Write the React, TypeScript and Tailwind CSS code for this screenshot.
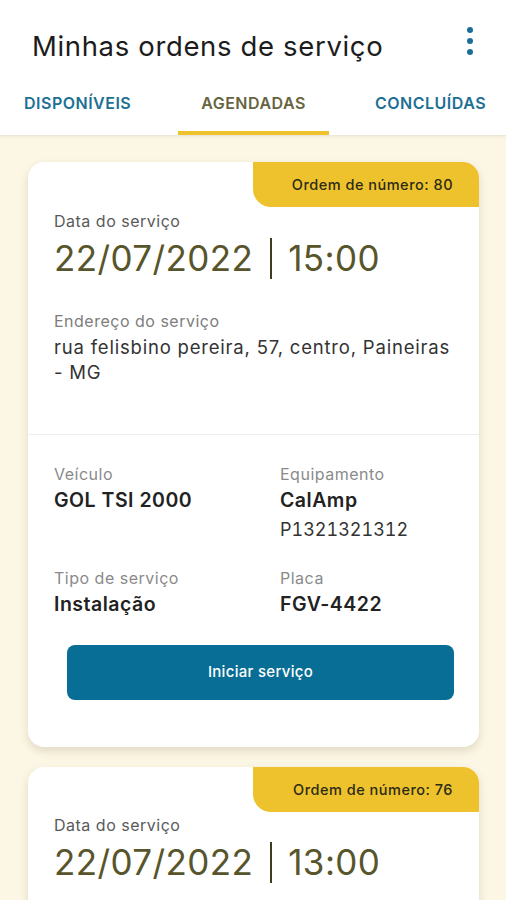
const font = { fontFamily: 'Inter, "Noto Sans", sans-serif' };

type Order = {
  numero: number;
  data: string;
  hora: string;
  endereco: string[];
  veiculo: string;
  equipamento: string;
  serial: string;
  tipo: string;
  placa: string;
};

const orders: Order[] = [
  {
    numero: 80,
    data: '22/07/2022',
    hora: '15:00',
    endereco: ['rua felisbino pereira, 57, centro, Paineiras', '- MG'],
    veiculo: 'GOL TSI 2000',
    equipamento: 'CalAmp',
    serial: 'P1321321312',
    tipo: 'Instalação',
    placa: 'FGV-4422',
  },
];

function Badge({ numero }: { numero: number }) {
  return (
    <div className="absolute top-0 right-0 w-[226px] h-[45px] bg-[#eec22c] rounded-bl-[18px] rounded-tr-[16px] flex items-center justify-end pr-[26px]">
      <span className="text-[14.5px] tracking-[0.5px] font-medium text-[#2b2a17]">Ordem de número: {numero}</span>
    </div>
  );
}

function DateLine({ data, hora }: { data: string; hora: string }) {
  return (
    <div className="flex items-center mt-[6px] text-[35px] leading-[42px] tracking-[0.4px] text-[#58552c]">
      <span>{data}</span>
      <span className="w-[2px] h-[41px] bg-[#3f3c22] ml-[17px] mr-[16px]" />
      <span>{hora}</span>
    </div>
  );
}

function Field({ label, children }: { label: string; children: React.ReactNode }) {
  return (
    <div>
      <p className="text-[16px] leading-[20px] tracking-[0.5px] text-[#8a8a8a]">{label}</p>
      <div className="mt-[4px] text-[19.5px] leading-[25px] tracking-[0.5px] text-[#222]">{children}</div>
    </div>
  );
}

function OrderCard({ order }: { order: Order }) {
  return (
    <div className="relative bg-white rounded-[16px] shadow-[0_4px_10px_rgba(60,50,10,0.14)]">
      <Badge numero={order.numero} />
      <div className="px-[26px] pt-[49px] pb-[49px]">
        <p className="text-[16px] leading-[20px] tracking-[0.5px] text-[#5a5a5a]">Data do serviço</p>
        <DateLine data={order.data} hora={order.hora} />
        <p className="mt-[32px] text-[16px] leading-[20px] tracking-[0.5px] text-[#7d7d7d]">Endereço do serviço</p>
        <p className="mt-[4px] text-[18.5px] leading-[25px] tracking-[0.8px] text-[#333] whitespace-nowrap">
          {order.endereco[0]}
          <br />
          {order.endereco[1]}
        </p>
      </div>
      <div className="h-px bg-[#eeeeee]" />
      <div className="px-[26px] pt-[29px] pb-[47px]">
        <div className="grid grid-cols-[226px_1fr] gap-y-[26px]">
          <Field label="Veículo">
            <span className="font-semibold">{order.veiculo}</span>
          </Field>
          <Field label="Equipamento">
            <span className="block font-semibold">{order.equipamento}</span>
            <span className="block mt-[4px] text-[18px] tracking-normal tabular-nums text-[#333]">{order.serial}</span>
          </Field>
          <Field label="Tipo de serviço">
            <span className="font-semibold">{order.tipo}</span>
          </Field>
          <Field label="Placa">
            <span className="font-semibold">{order.placa}</span>
          </Field>
        </div>
        <button className="mt-[28px] ml-[13px] w-[387px] h-[55px] rounded-[8px] bg-[#086e95] text-white text-[15px] tracking-[0.3px] font-medium flex items-center justify-center">
          Iniciar serviço
        </button>
      </div>
    </div>
  );
}

export default function App() {
  return (
    <div className="w-[506px] h-[900px] overflow-hidden bg-[#fcf6e4] flex flex-col" style={font}>
      {/* Header */}
      <header className="bg-white border-b border-[#ece7d6] shadow-[0_1px_3px_rgba(0,0,0,0.06)] shrink-0">
        <div className="flex items-center justify-between pt-[30px] pl-[32px] pr-[30px]">
          <h1 className="text-[27.5px] leading-[32px] tracking-[0.65px] text-[#1c1c1c]">Minhas ordens de serviço</h1>
          <div className="flex flex-col items-center gap-[5px] w-[12px] -mt-[10px]">
            <span className="w-[6px] h-[6px] rounded-full bg-[#1a6f99]" />
            <span className="w-[6px] h-[6px] rounded-full bg-[#1a6f99]" />
            <span className="w-[6px] h-[6px] rounded-full bg-[#1a6f99]" />
          </div>
        </div>
        <nav className="flex mt-[31px] text-[16px] leading-[20px] tracking-[0.5px] font-semibold">
          <div className="w-[178px] pl-[24px] pb-[22px] text-[#1d6f93]">DISPONÍVEIS</div>
          <div className="w-[151px] flex flex-col items-center">
            <span className="text-[#66643f] pb-[18px]">AGENDADAS</span>
            <span className="w-full h-[4px] bg-[#eec22c]" />
          </div>
          <div className="flex-1 pl-[46px] text-[#1d6f93]">CONCLUÍDAS</div>
        </nav>
      </header>

      {/* Lista */}
      <main className="flex-1 px-[28px] pt-[26px] pr-[27px] flex flex-col gap-[20px]">
        {orders.map((o) => (
          <OrderCard key={o.numero} order={o} />
        ))}
        <div className="relative bg-white rounded-[16px] shadow-[0_4px_10px_rgba(60,50,10,0.14)] shrink-0">
          <Badge numero={76} />
          <div className="px-[26px] pt-[48px] pb-[60px]">
            <p className="text-[16px] leading-[20px] tracking-[0.5px] text-[#5a5a5a]">Data do serviço</p>
            <DateLine data="22/07/2022" hora="13:00" />
          </div>
        </div>
      </main>
    </div>
  );
}
